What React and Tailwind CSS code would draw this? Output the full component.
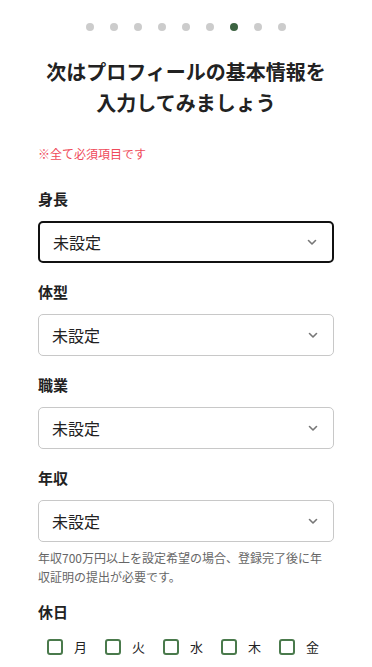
import React from 'react';

const steps = [0, 1, 2, 3, 4, 5, 6, 7, 8];
const fields = ['身長', '体型', '職業', '年収'];
const days = ['月', '火', '水', '木', '金'];

const Chevron = () => (
  <svg width="12" height="12" viewBox="0 0 12 12" fill="none">
    <path d="M2.5 4.5 L6 8 L9.5 4.5" stroke="#777" strokeWidth="1.6" strokeLinecap="round" strokeLinejoin="round" />
  </svg>
);

const SelectBox = ({ active }) => (
  <div
    className={`flex items-center justify-between h-[42px] pl-[13px] pr-[14px] rounded-[5px] bg-white ${
      active ? 'border-2 border-[#111]' : 'border border-[#c8c8c8]'
    }`}
  >
    <span className="text-[16px] text-[#222]">未設定</span>
    <Chevron />
  </div>
);

export default function App() {
  return (
    <div
      className="w-[372px] h-[667px] overflow-hidden bg-white text-[#222]"
      style={{ fontFamily: '"Noto Sans CJK JP", "Noto Sans", sans-serif' }}
    >
      <div className="flex justify-center gap-[16px] pt-[23px]">
        {steps.map((i) => (
          <span
            key={i}
            className={`w-[8px] h-[8px] rounded-full ${i === 6 ? 'bg-[#3c6341]' : 'bg-[#cccccc]'}`}
          />
        ))}
      </div>

      <h1 className="mt-[25px] text-center text-[20px] font-bold leading-[31px]">
        次はプロフィールの基本情報を
        <br />
        入力してみましょう
      </h1>

      <div className="px-[38px]">
        <p className="mt-[27px] text-[12px] text-[#ef4a5a] leading-[18px]">※全て必須項目です</p>

        {fields.map((f, i) => (
          <div key={f} className={i === 0 ? 'mt-[26px]' : 'mt-[19px]'}>
            <div className="text-[15px] font-bold leading-[20px] mb-[12px]">{f}</div>
            <SelectBox active={i === 0} />
          </div>
        ))}

        <p className="mt-[6px] pr-[4px] text-[12px] leading-[19px] text-[#666]">
          年収700万円以上を設定希望の場合、登録完了後に年収証明の提出が必要です。
        </p>

        <div className="mt-[16px] text-[15px] font-bold leading-[20px]">休日</div>
        <div className="mt-[15px] flex pl-[9px] gap-[18px]">
          {days.map((d) => (
            <label key={d} className="flex items-center gap-[11px]">
              <span className="w-[16px] h-[16px] rounded-[3px] border-2 border-[#4a7a4c] bg-white" />
              <span className="text-[13px] text-[#222]">{d}</span>
            </label>
          ))}
        </div>
      </div>
    </div>
  );
}
